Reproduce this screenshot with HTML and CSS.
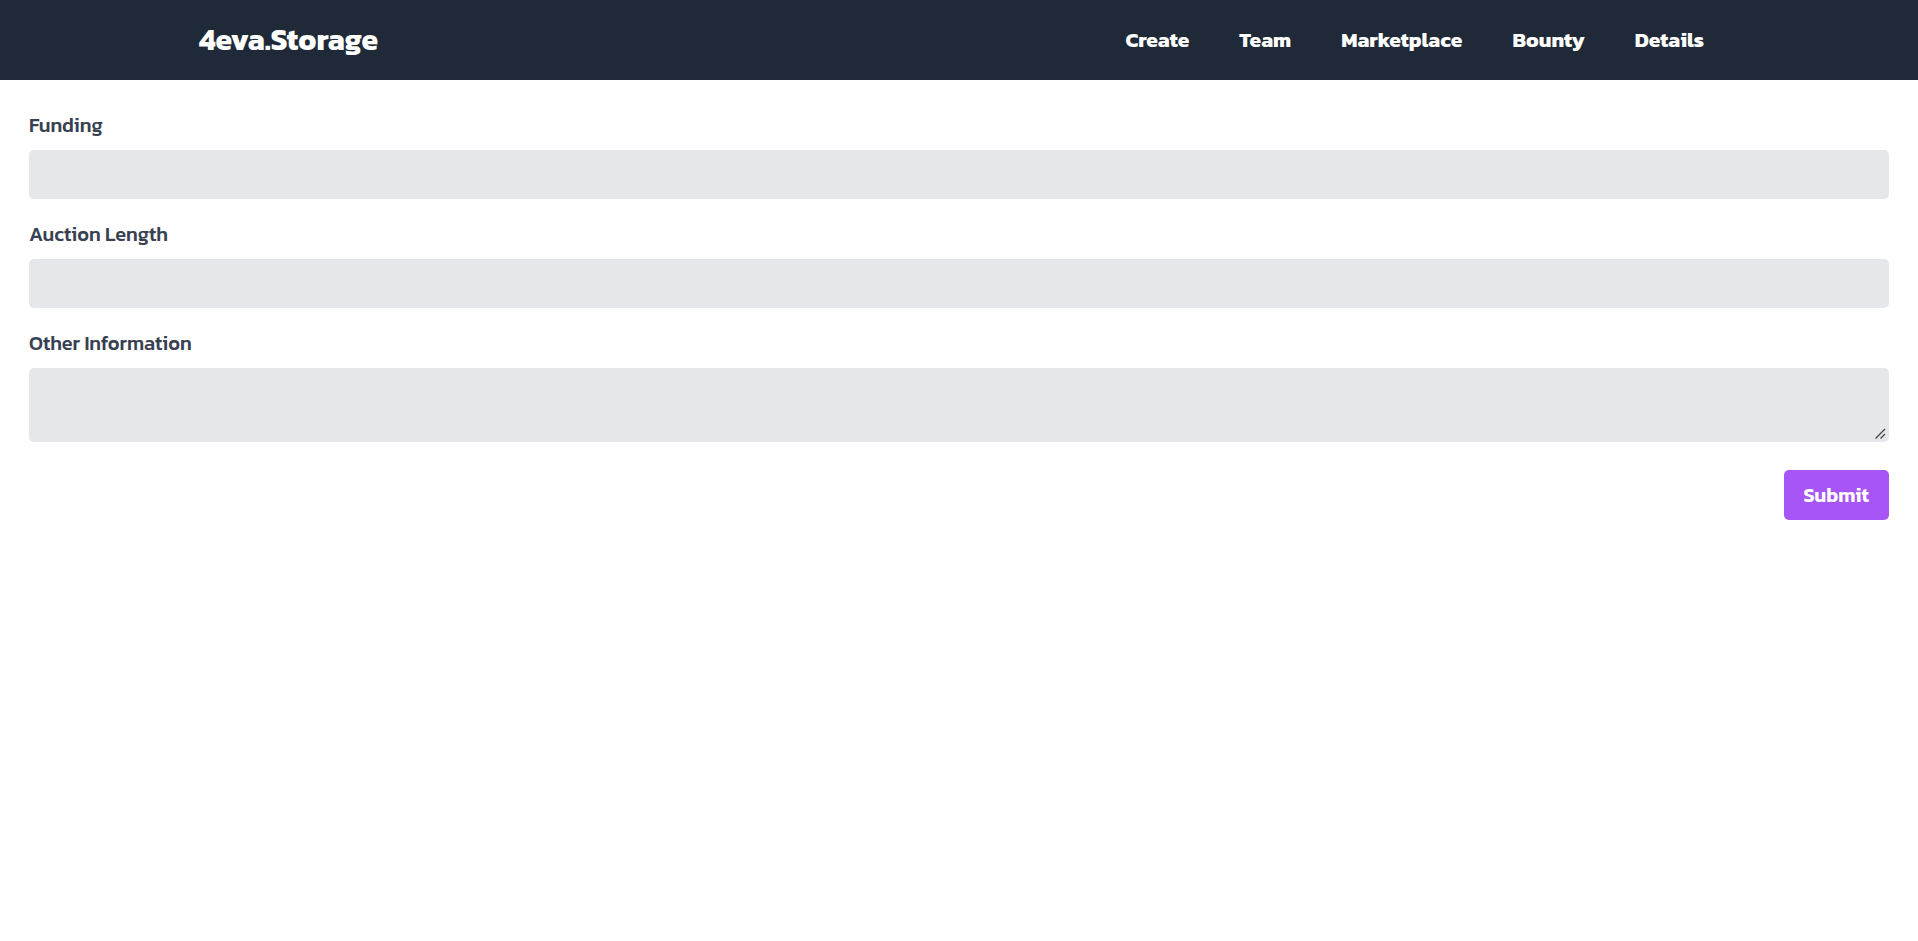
FILE: index.html
```html
<!DOCTYPE html>
<html lang="en">
<head>
<meta charset="utf-8">
<meta name="viewport" content="width=device-width, initial-scale=1">
<title>4eva.Storage</title>
<link rel="stylesheet" href="styles.css">
</head>
<body>
<header class="site-header">
  <div class="header-inner">
    <a class="brand" href="#">4eva.Storage</a>
    <nav class="nav">
      <a class="nav-link" href="#">Create</a>
      <a class="nav-link" href="#">Team</a>
      <a class="nav-link" href="#">Marketplace</a>
      <a class="nav-link" href="#">Bounty</a>
      <a class="nav-link" href="#">Details</a>
    </nav>
  </div>
</header>
<main>
  <form class="form">
    <div class="field">
      <label class="label" for="funding">Funding</label>
      <input class="control" id="funding" type="text">
    </div>
    <div class="field">
      <label class="label" for="length">Auction Length</label>
      <input class="control" id="length" type="text">
    </div>
    <div class="field">
      <label class="label" for="info">Other Information</label>
      <textarea class="control" id="info" rows="2"></textarea>
    </div>
    <button class="submit" type="submit">Submit</button>
  </form>
</main>
</body>
</html>
```
FILE: styles.css
```css
*,
*::before,
*::after {
  box-sizing: border-box;
}

body {
  margin: 0;
  background: #fff;
  color: #374151;
  font-family: Kanit, Roboto, "Noto Sans", sans-serif;
  font-size: 20px;
  line-height: 28px;
}

.site-header {
  background: #1f2937;
}

.header-inner {
  display: flex;
  flex-wrap: wrap;
  align-items: center;
  justify-content: space-between;
  max-width: 1536px;
  min-height: 80px;
  margin: 0 auto;
  padding: 0 23px 0 8px;
}

.brand {
  color: #fff;
  font-size: 30px;
  font-weight: 700;
  line-height: 40px;
  text-decoration: none;
}

.nav {
  display: flex;
  flex-wrap: wrap;
  gap: 8px 50px;
}

.nav-link {
  color: #fff;
  font-size: 21px;
  font-weight: 700;
  text-decoration: none;
}

.form {
  display: flex;
  flex-direction: column;
  gap: 21px;
  padding: 31px 29px;
}

.field {
  display: flex;
  flex-direction: column;
  gap: 11px;
}

.label {
  font-weight: 500;
}

.control {
  display: block;
  width: 100%;
  margin: 0;
  padding: 12px;
  border: 0;
  border-radius: 5px;
  background: #e5e7eb;
  color: #374151;
  font: inherit;
  font-size: 16px;
  line-height: 25px;
}

input.control {
  height: 49px;
}

textarea.control {
  resize: vertical;
}

textarea.control::-webkit-resizer {
  background: url("data:image/svg+xml,%3Csvg xmlns='http://www.w3.org/2000/svg' width='15' height='15'%3E%3Cpath d='M1.5 11.5 11 2M6.5 11.5 11 7' stroke='%23444' stroke-width='1.3' fill='none'/%3E%3C/svg%3E") right bottom no-repeat;
}

.submit {
  align-self: flex-end;
  margin-top: 7px;
  padding: 11px 20px;
  border: 0;
  border-radius: 5px;
  background: #a855f7;
  color: #fff;
  font: inherit;
  font-weight: 600;
  cursor: pointer;
}
```
